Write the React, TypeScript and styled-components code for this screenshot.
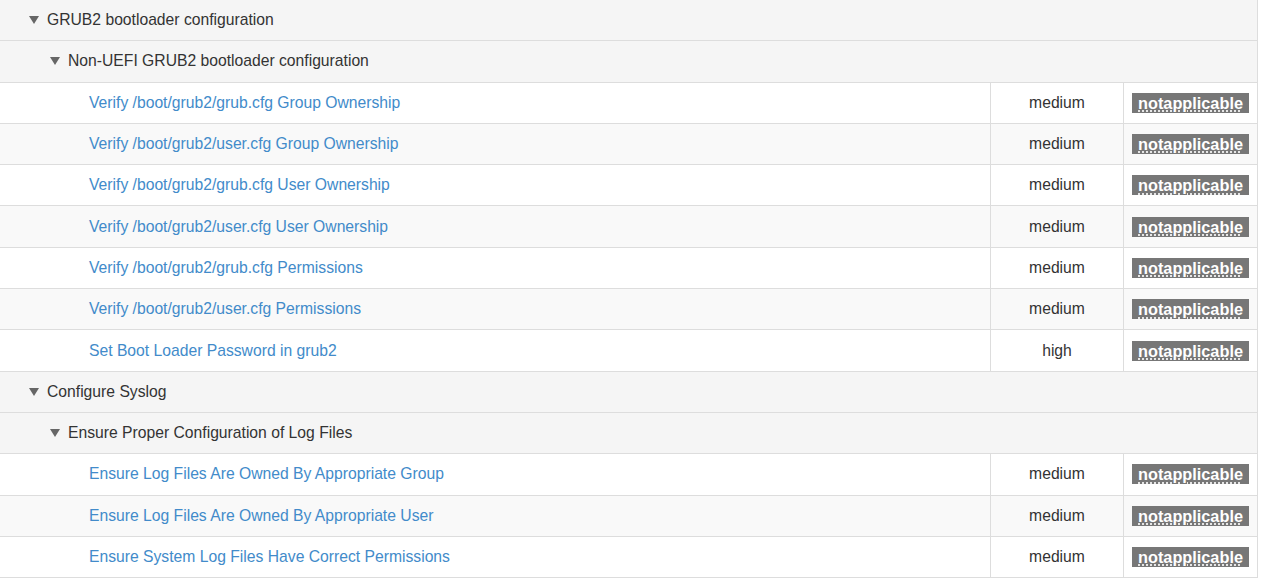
import React from "react";
import styled, { createGlobalStyle } from "styled-components";

const Global = createGlobalStyle`
  body { margin: 0; background: #fff; font-family: "Liberation Sans", Arial, sans-serif; font-size: 15.7px; color: #333; }
`;

const Table = styled.table`
  width: 1258px;
  border-collapse: collapse;
  margin-top: -1px;
`;

const Row = styled.tr<{ $alt?: boolean; $group?: boolean }>`
  background: ${(p) => (p.$group ? "#f5f5f5" : p.$alt ? "#f9f9f9" : "#fff")};
  & > td { border: 1px solid #ddd; height: 41.3px; padding: 0 8px; box-sizing: border-box; }
  & > td:first-child { border-left: none; }
`;

const GroupCell = styled.td<{ $level: number }>`
  padding-left: ${(p) => (p.$level === 1 ? 29 : 50)}px !important;
`;

const Tri = styled.span`
  display: inline-block;
  width: 0; height: 0;
  border-left: 5px solid transparent;
  border-right: 5px solid transparent;
  border-top: 8px solid #666;
  margin-right: 8px;
  vertical-align: middle;
  position: relative; top: -1px;
`;

const TitleCell = styled.td`
  padding-left: 89px !important;
`;

const Link = styled.a`
  color: #428bca;
  text-decoration: none;
`;

const SevCell = styled.td`
  width: 133px;
  text-align: center;
`;

const ResCell = styled.td`
  width: 134px;
  text-align: center;
`;

const Badge = styled.span`
  display: inline-block;
  background: #777;
  color: #fff;
  font-weight: bold;
  font-size: 16.3px;
  padding: 0 6px;
  line-height: 20px;
  text-decoration: underline dotted;
  text-underline-offset: 2px;
`;

type Item = { g?: 1 | 2; t: string; sev?: string };

const items: Item[] = [
  { g: 1, t: "GRUB2 bootloader configuration" },
  { g: 2, t: "Non-UEFI GRUB2 bootloader configuration" },
  { t: "Verify /boot/grub2/grub.cfg Group Ownership", sev: "medium" },
  { t: "Verify /boot/grub2/user.cfg Group Ownership", sev: "medium" },
  { t: "Verify /boot/grub2/grub.cfg User Ownership", sev: "medium" },
  { t: "Verify /boot/grub2/user.cfg User Ownership", sev: "medium" },
  { t: "Verify /boot/grub2/grub.cfg Permissions", sev: "medium" },
  { t: "Verify /boot/grub2/user.cfg Permissions", sev: "medium" },
  { t: "Set Boot Loader Password in grub2", sev: "high" },
  { g: 1, t: "Configure Syslog" },
  { g: 2, t: "Ensure Proper Configuration of Log Files" },
  { t: "Ensure Log Files Are Owned By Appropriate Group", sev: "medium" },
  { t: "Ensure Log Files Are Owned By Appropriate User", sev: "medium" },
  { t: "Ensure System Log Files Have Correct Permissions", sev: "medium" },
];

export default function App() {
  let idx = 0;
  return (
    <>
      <Global />
      <Table>
        <tbody>
          {items.map((it, i) => {
            if (it.g) {
              idx = 0;
              return (
                <Row key={i} $group>
                  <GroupCell colSpan={3} $level={it.g}>
                    <Tri />
                    {it.t}
                  </GroupCell>
                </Row>
              );
            }
            const alt = idx++ % 2 === 1;
            return (
              <Row key={i} $alt={alt}>
                <TitleCell><Link href="#">{it.t}</Link></TitleCell>
                <SevCell>{it.sev}</SevCell>
                <ResCell><Badge>notapplicable</Badge></ResCell>
              </Row>
            );
          })}
        </tbody>
      </Table>
    </>
  );
}
